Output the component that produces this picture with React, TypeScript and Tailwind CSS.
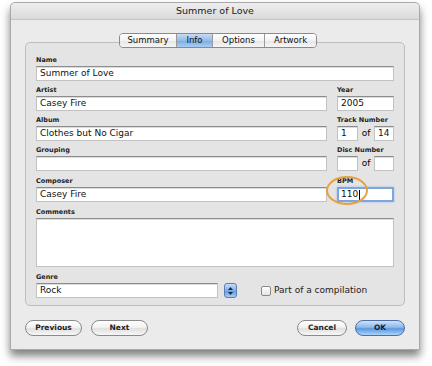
import React from "react";

const font = { fontFamily: '"DejaVu Sans", "Liberation Sans", sans-serif' };

function Label({ text, className = "" }: { text: string; className?: string }) {
  return (
    <div className={`h-[15px] flex items-end pb-[3px] text-[6.5px] font-bold leading-none text-[#222] ${className}`}>
      {text}
    </div>
  );
}

function Field({ value = "", className = "" }: { value?: string; className?: string }) {
  return (
    <div
      className={`h-[15px] bg-white border border-[#c2c2c2] border-t-[#8c8c8c] shadow-[inset_0_1px_0_#dcdcdc] flex items-center pl-[3px] text-[9px] leading-none text-[#111] ${className}`}
    >
      {value}
    </div>
  );
}

function Button({ text, primary = false, className = "" }: { text: string; primary?: boolean; className?: string }) {
  return (
    <div
      className={`h-[16px] rounded-full border flex items-center justify-center text-[7.5px] font-bold leading-none ${
        primary
          ? "border-[#4d6fa6] bg-[linear-gradient(#cfe2f8,#8cb8ec_45%,#5f97dd_55%,#a9d3fa)] text-[#10213a]"
          : "border-[#8a8a8a] bg-[linear-gradient(#ffffff,#f2f2f2_45%,#e0e0e0_55%,#f7f7f7)] text-[#222]"
      } ${className}`}
    >
      {text}
    </div>
  );
}

function Tabs() {
  const tabs = [
    { name: "Summary", w: "w-[56px]" },
    { name: "Info", w: "w-[36px]", active: true },
    { name: "Options", w: "w-[52px]" },
    { name: "Artwork", w: "w-[52px]" },
  ];
  return (
    <div className="absolute left-[93px] top-[-10px] h-[15px] flex border border-[#8a8a8a] rounded-[4px] overflow-hidden">
      {tabs.map((t, i) => (
        <div
          key={t.name}
          className={`${t.w} h-full flex items-center justify-center text-[8.5px] leading-none text-[#111] ${
            i > 0 ? "border-l border-[#9a9a9a]" : ""
          } ${
            t.active
              ? "bg-[linear-gradient(#c6dcf6,#92bbe9_50%,#7aaae3_51%,#a8cdf3)]"
              : "bg-[linear-gradient(#ffffff,#f3f3f3_50%,#e6e6e6_51%,#f5f5f5)]"
          }`}
        >
          {t.name}
        </div>
      ))}
    </div>
  );
}

export default function App() {
  return (
    <div className="w-[432px] h-[366px] bg-white pt-[2px] pl-[10px]" style={font}>
      <div className="w-[410px] h-[348px] bg-[#ebebeb] rounded-t-[5px] border border-[#a9a9a9] shadow-[0_6px_9px_rgba(0,0,0,0.5)] flex flex-col">
        {/* title bar */}
        <div className="h-[17px] rounded-t-[5px] bg-[linear-gradient(#eeeeee,#dadada)] border-b border-[#c4c4c4] flex items-center justify-center text-[9.5px] text-[#222] leading-none">
          Summer of Love
        </div>

        {/* group box */}
        <div className="relative mt-[22px] ml-[14px] w-[380px] h-[264px] rounded-[5px] border border-[#bdbdbd] bg-[#e4e4e4] pt-[8px] px-[10px]">
          <Tabs />

          <Label text="Name" />
          <Field value="Summer of Love" />

          <div className="flex gap-[10px]">
            <div className="w-[291px]">
              <Label text="Artist" />
              <Field value="Casey Fire" />
              <Label text="Album" />
              <Field value="Clothes but No Cigar" />
              <Label text="Grouping" />
              <Field />
              <Label text="Composer" className="h-[16px]" />
              <Field value="Casey Fire" />
            </div>
            <div className="w-[57px]">
              <Label text="Year" />
              <Field value="2005" />
              <Label text="Track Number" />
              <div className="flex items-center">
                <Field value="1" className="w-[21px]" />
                <span className="w-[16px] text-center text-[9px] leading-none">of</span>
                <Field value="14" className="w-[20px]" />
              </div>
              <Label text="Disc Number" />
              <div className="flex items-center">
                <Field className="w-[21px]" />
                <span className="w-[16px] text-center text-[9px] leading-none">of</span>
                <Field className="w-[20px]" />
              </div>
              <div className="relative">
                <Label text="BPM" className="h-[16px]" />
                <div className="h-[15px] bg-white border-2 border-[#7ea6dc] shadow-[0_0_2px_#9cc0ee] flex items-center pl-[2px] text-[9px] leading-none text-[#111]">
                  110<span className="inline-block w-px h-[10px] bg-black ml-[1px]" />
                </div>
                <div className="absolute left-[-11px] top-[5px] w-[42px] h-[29px] rounded-[50%] border-2 border-[#e8a13f] pointer-events-none" />
              </div>
            </div>
          </div>

          <Label text="Comments" className="h-[16px]" />
          <div className="h-[49px] bg-white border border-[#c2c2c2] border-t-[#8c8c8c] shadow-[inset_0_1px_0_#dcdcdc]" />

          <Label text="Genre" className="h-[16px]" />
          <div className="flex items-center">
            <Field value="Rock" className="w-[182px]" />
            <div className="ml-[6px] w-[13px] h-[15px] rounded-[3px] border border-[#5b7fb4] bg-[linear-gradient(#c8def7,#7fb0e8_50%,#5e97dd_51%,#a6cdf5)] flex items-center justify-center">
              <svg width="7" height="10" viewBox="0 0 7 10">
                <path d="M3.5 1 L6 4 L1 4 Z" fill="#1b2a44" />
                <path d="M3.5 9 L6 6 L1 6 Z" fill="#1b2a44" />
              </svg>
            </div>
            <div className="ml-[24px] w-[10px] h-[10px] rounded-[2px] border border-[#8a8a8a] bg-[linear-gradient(#ffffff,#e2e2e2)]" />
            <span className="ml-[3px] text-[9px] leading-none text-[#222]">Part of a compilation</span>
          </div>
        </div>

        {/* buttons */}
        <div className="mt-[14px] px-[14px] flex items-center">
          <Button text="Previous" className="w-[57px]" />
          <Button text="Next" className="w-[57px] ml-[9px]" />
          <div className="flex-1" />
          <Button text="Cancel" className="w-[50px]" />
          <Button text="OK" primary className="w-[50px] ml-[8px]" />
        </div>
      </div>
    </div>
  );
}
